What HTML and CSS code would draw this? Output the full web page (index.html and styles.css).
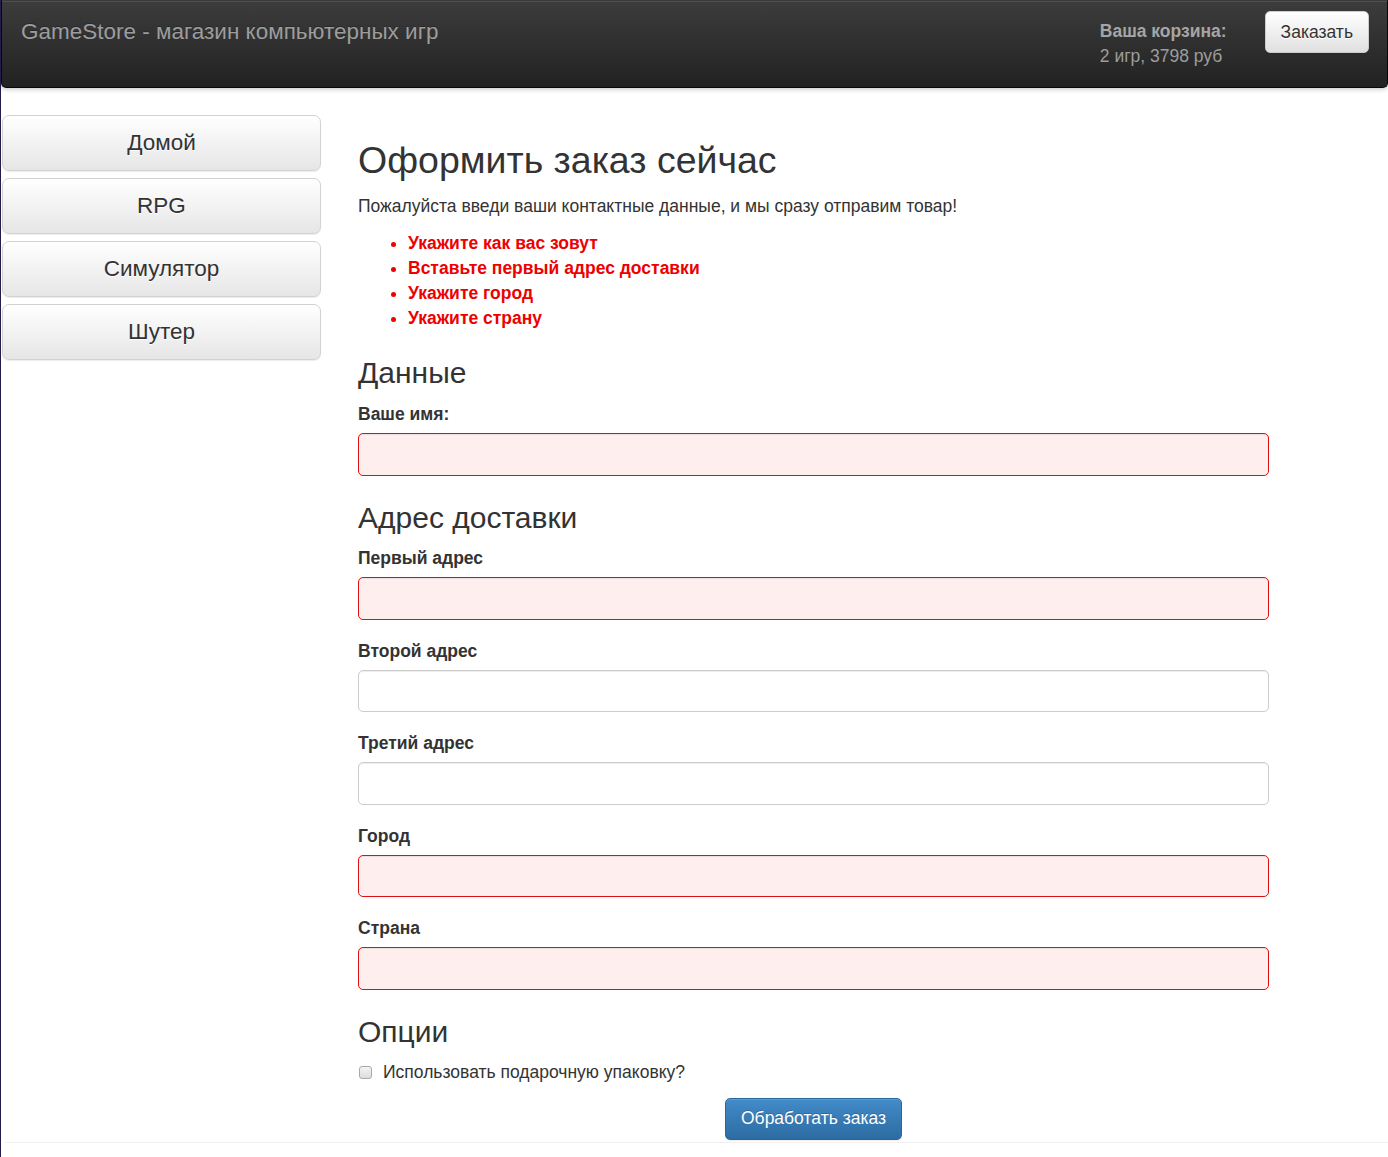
FILE: index.html
```html
<!DOCTYPE html>
<html lang="ru">
<head>
<meta charset="utf-8">
<title>GameStore</title>
<link rel="stylesheet" href="styles.css">
</head>
<body>
<header class="navbar">
  <span class="brand">GameStore - магазин компьютерных игр</span>
  <div class="navbar-right">
    <div class="cart">
      <b>Ваша корзина:</b><br>
      2 игр, 3798 руб
    </div>
    <a class="btn btn-default navbar-btn">Заказать</a>
  </div>
</header>
<div class="layout">
  <nav class="sidebar">
    <a class="btn btn-default btn-lg">Домой</a>
    <a class="btn btn-default btn-lg">RPG</a>
    <a class="btn btn-default btn-lg">Симулятор</a>
    <a class="btn btn-default btn-lg">Шутер</a>
  </nav>
  <main class="content">
    <h2 class="title">Оформить заказ сейчас</h2>
    <p class="lead-text">Пожалуйста введи ваши контактные данные, и мы сразу отправим товар!</p>
    <ul class="errors">
      <li>Укажите как вас зовут</li>
      <li>Вставьте первый адрес доставки</li>
      <li>Укажите город</li>
      <li>Укажите страну</li>
    </ul>
    <h3 class="section">Данные</h3>
    <div class="form-group">
      <label class="field-label">Ваше имя:</label>
      <input class="form-control error" type="text">
    </div>
    <h3 class="section">Адрес доставки</h3>
    <div class="form-group">
      <label class="field-label">Первый адрес</label>
      <input class="form-control error" type="text">
    </div>
    <div class="form-group">
      <label class="field-label">Второй адрес</label>
      <input class="form-control" type="text">
    </div>
    <div class="form-group">
      <label class="field-label">Третий адрес</label>
      <input class="form-control" type="text">
    </div>
    <div class="form-group">
      <label class="field-label">Город</label>
      <input class="form-control error" type="text">
    </div>
    <div class="form-group">
      <label class="field-label">Страна</label>
      <input class="form-control error" type="text">
    </div>
    <h3 class="section">Опции</h3>
    <div class="checkbox">
      <label><input type="checkbox" class="check">Использовать подарочную упаковку?</label>
    </div>
    <div class="actions">
      <button class="btn btn-primary" type="button">Обработать заказ</button>
    </div>
  </main>
</div>
<div class="footer-line"></div>
</body>
</html>
```

FILE: styles.css
```css
html, body {
  margin: 0;
  padding: 0;
}
body {
  border-left: 1px solid #241c4c;
  min-height: 1157px;
  box-sizing: border-box;
  font-family: "Liberation Sans", Arial, sans-serif;
  font-size: 17.5px;
  line-height: 25px;
  color: #333;
  background: #fff;
}
.navbar {
  display: flex;
  justify-content: space-between;
  align-items: flex-start;
  height: 86px;
  background: linear-gradient(to bottom, #3c3c3c 0%, #222 100%);
  border: 1px solid #080808;
  border-top: 1px solid #3a3a3a;
  border-radius: 0 0 5px 5px;
  box-shadow: inset 0 1px 0 rgba(255,255,255,.1), 0 1px 5px rgba(0,0,0,.25);
}
.brand {
  padding: 18px 19px;
  font-size: 22.5px;
  line-height: 25px;
  color: #9d9d9d;
  text-shadow: 0 -1px 0 rgba(0,0,0,.25);
}
.navbar-right {
  display: flex;
  align-items: flex-start;
  padding-right: 18px;
}
.cart {
  margin-top: 18px;
  margin-right: 38px;
  color: #9d9d9d;
  line-height: 25px;
}
.cart b {
  color: #a5a5a5;
}
.btn {
  display: inline-block;
  box-sizing: border-box;
  font-family: inherit;
  font-size: 17.5px;
  line-height: 25px;
  padding: 7.5px 15px;
  border: 1px solid transparent;
  border-radius: 5px;
  text-align: center;
  cursor: pointer;
  text-decoration: none;
}
.btn-default {
  color: #333;
  background: linear-gradient(to bottom, #fff 0%, #e0e0e0 100%);
  border-color: #ccc;
  text-shadow: 0 1px 0 #fff;
  box-shadow: inset 0 1px 0 rgba(255,255,255,.15), 0 1px 1px rgba(0,0,0,.075);
}
.navbar-btn {
  margin-top: 10px;
}
.layout {
  display: flex;
  align-items: flex-start;
  margin-top: 24px;
}
.sidebar {
  display: flex;
  flex-direction: column;
  gap: 7px;
  width: 319px;
  margin-left: 1px;
  margin-top: 3px;
}
.btn-lg {
  display: block;
  font-size: 22.5px;
  line-height: 30px;
  padding: 12px 20px;
  border-radius: 7px;
  background: linear-gradient(to bottom, #fff 0%, #e6e6e6 100%);
  border-color: #d2d2d2;
}
.content {
  width: 911px;
  margin-left: 37px;
  padding-top: 3px;
}
.title {
  margin: 25px 0 12.5px;
  font-size: 37.5px;
  font-weight: 500;
  line-height: 1.1;
}
.lead-text {
  margin: 0 0 12.5px;
}
.errors {
  margin: 0 0 12.5px;
  padding-left: 50px;
  color: #ee0000;
  font-weight: bold;
}
.section {
  margin: 25px 0 12.5px;
  font-size: 30px;
  font-weight: 500;
  line-height: 1.1;
}
.form-group {
  margin-bottom: 18.75px;
}
.field-label {
  display: inline-block;
  margin-bottom: 6.25px;
  font-weight: bold;
}
.form-control {
  display: block;
  box-sizing: border-box;
  width: 100%;
  height: 42.5px;
  margin: 0;
  padding: 7.5px 15px;
  font-family: inherit;
  font-size: 17.5px;
  color: #555;
  background: #fff;
  border: 1px solid #ccc;
  border-radius: 5px;
  box-shadow: inset 0 1px 1px rgba(0,0,0,.075);
}
.form-control.error {
  border-color: #dd1111;
  background: #ffeeee;
}
.checkbox {
  margin: 12.5px 0;
}
.checkbox label {
  display: block;
  position: relative;
  padding-left: 25px;
}
.check {
  position: absolute;
  left: 1px;
  top: 6px;
  margin: 0;
  width: 13px;
  height: 13px;
  appearance: none;
  -webkit-appearance: none;
  border: 1px solid #a9a9a9;
  border-radius: 3px;
  background: linear-gradient(to bottom, #f4f4f4, #dcdcdc);
  box-sizing: border-box;
}
.actions {
  display: flex;
  justify-content: center;
}
.btn-primary {
  color: #fff;
  background: linear-gradient(to bottom, #428bca 0%, #2d6ca2 100%);
  border-color: #2b669a;
  text-shadow: 0 -1px 0 rgba(0,0,0,.2);
  box-shadow: inset 0 1px 0 rgba(255,255,255,.15), 0 1px 1px rgba(0,0,0,.075);
}
.footer-line {
  margin-top: 2px;
  margin-left: 4px;
  border-top: 1px solid #f0f0f0;
}
```
